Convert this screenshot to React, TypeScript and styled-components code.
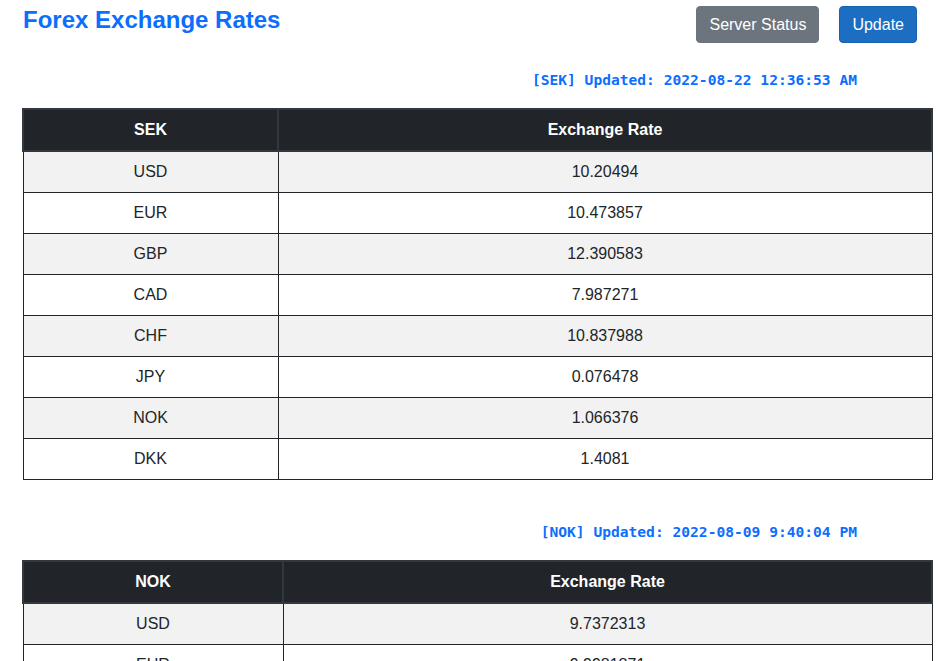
import React from 'react';
import styled, { createGlobalStyle } from 'styled-components';

const GlobalStyle = createGlobalStyle`
    html {
        overflow: hidden;
    }
    body {
        margin: 0;
        background: #ffffff;
        font-family: 'Liberation Sans', Arial, Helvetica, sans-serif;
        font-size: 16px;
        color: #212529;
    }
    *, *::before, *::after {
        box-sizing: border-box;
    }
`;

type RateTable = {
    base: string;
    updated: string;
    keyWidth: number;
    rates: [string, string][];
};

const TABLES: RateTable[] = [
    {
        base: 'SEK',
        updated: '2022-08-22 12:36:53 AM',
        keyWidth: 255,
        rates: [
            ['USD', '10.20494'],
            ['EUR', '10.473857'],
            ['GBP', '12.390583'],
            ['CAD', '7.987271'],
            ['CHF', '10.837988'],
            ['JPY', '0.076478'],
            ['NOK', '1.066376'],
            ['DKK', '1.4081'],
        ],
    },
    {
        base: 'NOK',
        updated: '2022-08-09 9:40:04 PM',
        keyWidth: 260,
        rates: [
            ['USD', '9.7372313'],
            ['EUR', '9.9981871'],
            ['GBP', '11.774112'],
            ['CAD', '7.5613901'],
        ],
    },
];

const Page = styled.div`
    padding: 6px 19px 0 22px;
`;

const Header = styled.header`
    display: flex;
    justify-content: space-between;
    align-items: flex-start;
`;

const Title = styled.h1`
    margin: 0 0 0 1px;
    font-size: 24px;
    line-height: 1.2;
    font-weight: 700;
    color: #0d6efd;
`;

const Actions = styled.div`
    display: flex;
    gap: 20px;
    margin-right: 16px;
`;

const Button = styled.button<{ $variant: 'secondary' | 'primary' }>`
    font-family: inherit;
    font-size: 16px;
    line-height: 1.5;
    padding: 6px 12px;
    height: 37px;
    border-radius: 4px;
    color: #ffffff;
    cursor: pointer;
    background: ${(p) => (p.$variant === 'primary' ? '#1b6ec2' : '#6c757d')};
    border: 1px solid ${(p) => (p.$variant === 'primary' ? '#1861ac' : '#6c757d')};
`;

const Section = styled.section`
    margin-top: 27px;
    & + & {
        margin-top: 42px;
    }
`;

const Stamp = styled.div`
    text-align: right;
    padding-right: 76px;
    margin-bottom: 18px;
    font-family: 'DejaVu Sans Mono', 'Liberation Mono', monospace;
    font-weight: 700;
    font-size: 14.6px;
    line-height: 20px;
    color: #0d6efd;
`;

const Table = styled.table`
    width: 100%;
    border-collapse: collapse;
    table-layout: fixed;
`;

const HeadCell = styled.th<{ $width?: number }>`
    ${(p) => (p.$width ? `width: ${p.$width}px;` : '')}
    padding: 8px;
    height: 42px;
    background: #212529;
    color: #ffffff;
    font-weight: 700;
    text-align: center;
    border: 2px solid #32383e;
`;

const Row = styled.tr`
    &:nth-child(odd) {
        background: #f2f2f2;
    }
`;

const Cell = styled.td`
    padding: 8px;
    height: 41px;
    text-align: center;
    line-height: 24px;
    border: 1px solid #212529;
`;

const RatesTable = ({ base, updated, keyWidth, rates }: RateTable) => (
    <Section>
        <Stamp>
            [{base}] Updated: {updated}
        </Stamp>
        <Table>
            <thead>
                <tr>
                    <HeadCell $width={keyWidth}>{base}</HeadCell>
                    <HeadCell>Exchange Rate</HeadCell>
                </tr>
            </thead>
            <tbody>
                {rates.map(([code, rate]) => (
                    <Row key={code}>
                        <Cell>{code}</Cell>
                        <Cell>{rate}</Cell>
                    </Row>
                ))}
            </tbody>
        </Table>
    </Section>
);

const App = () => (
    <>
        <GlobalStyle />
        <Page>
            <Header>
                <Title>Forex Exchange Rates</Title>
                <Actions>
                    <Button $variant="secondary">Server Status</Button>
                    <Button $variant="primary">Update</Button>
                </Actions>
            </Header>
            {TABLES.map((t) => (
                <RatesTable key={t.base} {...t} />
            ))}
        </Page>
    </>
);

export default App;
